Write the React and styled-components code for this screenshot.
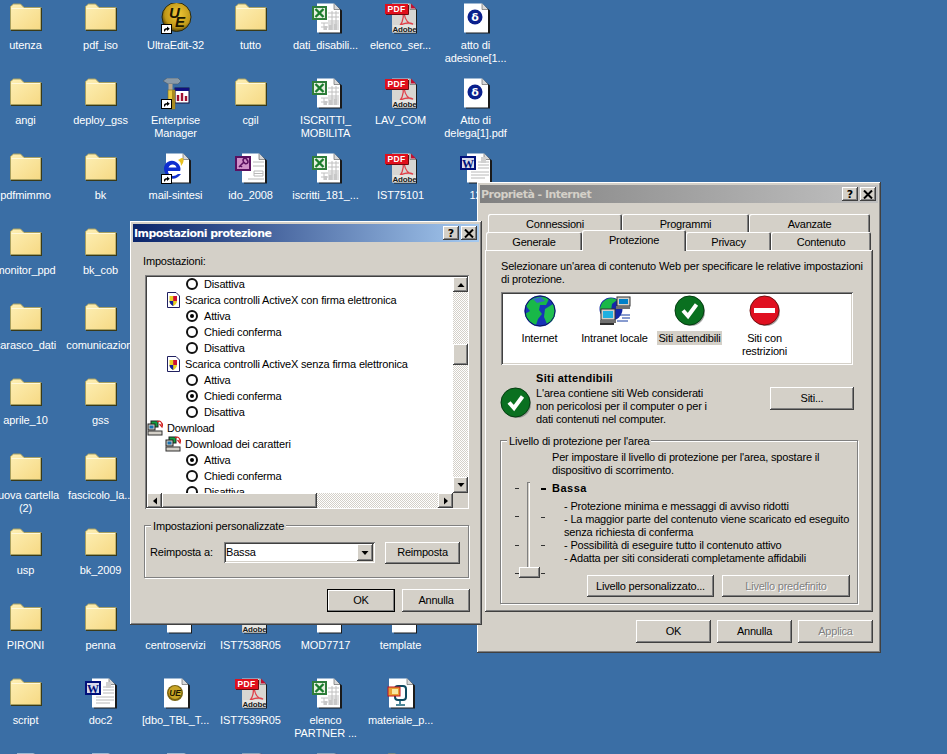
import React, { useId } from "react";
import styled, { createGlobalStyle, css } from "styled-components";

const UI_FONT = `"Liberation Sans", Arial, sans-serif`;

const Global = createGlobalStyle`
  html, body { margin: 0; padding: 0; overflow: hidden; background: #3a6ea5; }
  * { box-sizing: border-box; }
`;

const raised = css`
  background: #d4d0c8;
  box-shadow: inset -1px -1px #404040, inset 1px 1px #fff, inset -2px -2px #808080, inset 2px 2px #d4d0c8;
`;
const sunken = css`
  box-shadow: inset 1px 1px #808080, inset -1px -1px #fff, inset 2px 2px #404040, inset -2px -2px #d4d0c8;
`;

const Desktop = styled.main`
  position: relative;
  width: 947px;
  height: 754px;
  overflow: hidden;
  background: #3a6ea5;
  font: 11px/13px ${UI_FONT};
  letter-spacing: -0.17px;
  color: #000;
`;
const IconGrid = styled.div`
  display: grid;
  grid-template-columns: repeat(7, 75px);
  grid-auto-rows: 75px;
  margin-left: -12px;
`;
const Cell = styled.div`
  padding-top: 3px;
`;
const CellIcon = styled.div`
  width: 32px;
  height: 32px;
  margin-left: 22px;
  svg { display: block; }
`;
const CellLabel = styled.div`
  margin-top: 4px;
  text-align: center;
  color: #fff;
  white-space: pre;
  letter-spacing: -0.1px;
`;

const Win = styled.section`
  position: absolute;
  left: ${(p) => p.$x}px;
  top: ${(p) => p.$y}px;
  width: ${(p) => p.$w}px;
  height: ${(p) => p.$h}px;
  padding: 3px;
  ${raised}
`;
const TitleBar = styled.header`
  display: flex;
  align-items: center;
  height: 18px;
  padding: 0 2px 0 1px;
  background: ${(p) =>
    p.$active ? "linear-gradient(90deg, #0a246a, #a6caf0)" : "linear-gradient(90deg, #808080, #c0c0c0)"};
`;
const TitleText = styled.h1`
  flex: 1;
  margin: 0;
  font: bold 11px/13px "DejaVu Sans", Verdana, sans-serif;
  letter-spacing: -0.55px;
  color: ${(p) => (p.$active ? "#fff" : "#d4d0c8")};
`;
const CaptionButton = styled.button`
  display: flex;
  align-items: center;
  justify-content: center;
  width: 16px;
  height: 14px;
  margin-left: ${(p) => (p.$gap ? "2px" : "0")};
  padding: 0;
  border: 0;
  font: bold 11px/11px "DejaVu Sans", sans-serif;
  color: #000;
  ${raised}
`;

const Button = styled.button`
  width: ${(p) => p.$w}px;
  height: ${(p) => p.$h || 23}px;
  padding: 0;
  border: 0;
  font: 11px/13px ${UI_FONT};
  letter-spacing: -0.22px;
  color: ${(p) => (p.disabled ? "#808080" : "#000")};
  text-shadow: ${(p) => (p.disabled ? "1px 1px #fff" : "none")};
  ${raised}
  ${(p) =>
    p.$default &&
    css`
      box-shadow: inset 0 0 0 1px #000, inset -2px -2px #808080, inset 2px 2px #fff;
    `}
`;

/* security settings dialog */
const DialogBody = styled.div`
  display: flex;
  flex-direction: column;
  padding: 13px 0 0 0;
`;
const FieldLabel = styled.div`
  margin-left: 10px;
`;
const ListBox = styled.div`
  display: grid;
  grid-template-columns: 306px 15px;
  grid-template-rows: 216px 15px;
  width: 324px;
  height: 234px;
  margin: 7px 0 0 12px;
  padding: 2px 1px 1px 2px;
  background: #fff;
  ${sunken}
`;
const TreeView = styled.div`
  overflow: hidden;
  & > div:first-child { margin-top: -1px; }
`;
const TreeRow = styled.div`
  display: flex;
  align-items: center;
  gap: ${(p) => (p.$radio ? 6 : 4)}px;
  height: 16px;
  padding-left: ${(p) => p.$indent}px;
  white-space: nowrap;
  svg { flex: none; }
`;
const Radio = styled.span`
  position: relative;
  flex: none;
  width: 12px;
  height: 12px;
  border: 2px solid #111;
  border-radius: 50%;
  background: #fff;
  ${(p) =>
    p.$on &&
    css`
      &::after {
        content: "";
        position: absolute;
        left: 2px;
        top: 2px;
        width: 4px;
        height: 4px;
        border-radius: 50%;
        background: #000;
      }
    `}
`;
const Dither = css`
  background: repeating-conic-gradient(#fff 0 25%, #d4d0c8 0 50%) 0 0 / 2px 2px;
`;
const VBar = styled.div`
  display: flex;
  flex-direction: column;
  ${Dither}
`;
const HBar = styled.div`
  display: flex;
  ${Dither}
`;
const BarButton = styled.div`
  flex: none;
  display: flex;
  align-items: center;
  justify-content: center;
  width: 15px;
  height: ${(p) => p.$h || 15}px;
  ${raised}
`;
const BarThumb = styled.div`
  flex: none;
  width: ${(p) => p.$w}px;
  height: ${(p) => p.$h}px;
  margin: ${(p) => p.$m || 0};
  ${raised}
`;
const BarCorner = styled.div`
  background: #d4d0c8;
`;

const Group = styled.div`
  position: relative;
  border: 1px solid #808080;
  box-shadow: 1px 1px #fff, inset 1px 1px #fff;
`;
const Legend = styled.span`
  position: absolute;
  left: ${(p) => p.$x}px;
  top: -6px;
  padding: 0 2px;
  background: #d4d0c8;
`;
const ResetGroup = styled(Group)`
  display: flex;
  align-items: center;
  width: 325px;
  height: 53px;
  margin: 16px 0 0 11px;
  padding: 2px 0 0 5px;
`;
const ResetLabel = styled.span`
  width: 74px;
`;
const Combo = styled.div`
  display: flex;
  align-items: center;
  justify-content: space-between;
  width: 151px;
  height: 21px;
  padding: 2px;
  background: #fff;
  ${sunken}
`;
const ComboValue = styled.span`
  padding-left: 0;
`;
const ComboArrow = styled(BarButton)`
  width: 16px;
  height: 17px;
`;
const ResetButton = styled(Button)`
  margin-left: 10px;
`;
const Footer = styled.div`
  display: flex;
  justify-content: flex-end;
  gap: ${(p) => p.$gap}px;
  margin: ${(p) => p.$m};
`;

/* internet properties */
const TabArea = styled.div`
  display: flex;
  flex-direction: column;
  margin: 11px 5px 0 5px;
`;
const TabRow = styled.div`
  display: flex;
  height: 18px;
  margin-left: ${(p) => p.$off}px;
`;
const Tab = styled.div`
  position: relative;
  display: flex;
  align-items: center;
  justify-content: center;
  width: ${(p) => p.$w}px;
  height: ${(p) => (p.$on ? 21 : 18)}px;
  margin-top: ${(p) => (p.$on ? -2 : 0)}px;
  padding: ${(p) => (p.$on ? "0 0 1px" : "2px 0 0")};
  letter-spacing: -0.25px;
  background: #d4d0c8;
  border-radius: 2px 2px 0 0;
  box-shadow: inset 1px 1px #fff, inset -1px 0 #404040, inset -2px 0 #808080;
  z-index: ${(p) => (p.$on ? 2 : 1)};
`;
const TabPanel = styled.div`
  display: flex;
  flex-direction: column;
  height: 362px;
  padding: 10px 15px 0 16px;
  ${raised}
`;
const Intro = styled.p`
  margin: 0;
  white-space: pre;
`;
const ZoneBox = styled.div`
  display: flex;
  width: 352px;
  height: 73px;
  margin-top: 6px;
  padding: 3px 0 0 1px;
  background: #fff;
  ${sunken}
`;
const Zone = styled.div`
  display: flex;
  flex-direction: column;
  align-items: center;
  width: 75px;
  flex: none;
`;
const ZoneName = styled.div`
  margin-top: 5px;
  text-align: center;
  white-space: pre;
  span { background: ${(p) => (p.$on ? "#d4d0c8" : "transparent")}; padding: 1px; }
`;
const InfoRow = styled.div`
  display: flex;
  margin-top: 7px;
  height: 52px;
`;
const InfoIcon = styled.div`
  width: 35px;
  padding-top: 15px;
  svg { display: block; margin-left: -1px; }
`;
const InfoText = styled.div`
  width: 234px;
  white-space: pre;
`;
const InfoTitle = styled.div`
  font-weight: bold;
  letter-spacing: 0.3px;
  margin-bottom: 1.5px;
`;
const SitesButton = styled(Button)`
  margin-top: 15px;
`;
const LevelGroup = styled(Group)`
  display: grid;
  grid-template-columns: 51px 1fr;
  width: 358px;
  height: 164px;
  margin: 16px 0 0 -1px;
  padding-top: 10px;
`;
const Slider = styled.div`
  position: relative;
  display: flex;
  width: 31px;
  height: 96px;
  margin: 31px 0 0 14px;
`;
const TickColumn = styled.div`
  display: flex;
  flex-direction: column;
  justify-content: space-between;
  width: 4px;
  padding: 6px 0 4px;
`;
const Tick = styled.i`
  display: block;
  width: ${(p) => (p.$bold ? 5 : 4)}px;
  height: ${(p) => (p.$bold ? 2 : 1)}px;
  background: ${(p) => (p.$bold ? "#000" : "#333")};
`;
const Track = styled.div`
  width: 3px;
  height: 96px;
  margin: 0 11px 0 8px;
  background: #d4d0c8;
  box-shadow: inset 1px 1px #808080, inset -1px -1px #fff;
`;
const Thumb = styled.div`
  position: absolute;
  left: 4px;
  top: 85px;
  width: 21px;
  height: 11px;
  ${raised}
`;
const LevelBody = styled.div`
  display: flex;
  flex-direction: column;
  white-space: pre;
`;
const LevelName = styled.div`
  margin-top: 5px;
  font-weight: bold;
  letter-spacing: 0.5px;
`;
const Bullets = styled.div`
  margin: 5px 0 0 12px;
`;
const LevelButtons = styled.div`
  display: flex;
  gap: 8px;
  margin: 10px 0 0 35px;
`;

/* ---------- drawings ---------- */
const Svg = ({ size = 32, children }) => (
  <svg width={size} height={size} viewBox={`0 0 ${size} ${size}`} xmlns="http://www.w3.org/2000/svg">
    {children}
  </svg>
);
const Shortcut = () => (
  <g>
    <rect x="1.5" y="21.5" width="10" height="9" fill="#fff" stroke="#000" strokeWidth="1" />
    <path d="M4 28.5 V26.5 Q4.5 25 7 25 V23.5 L9.8 25.8 L7 28 V26.6 Q5.3 26.6 5 28.5 Z" fill="#000" />
  </g>
);
const Folder = () => {
  const id = useId();
  return (
    <Svg>
      <defs>
        <linearGradient id={id} x1="0" y1="0" x2="1" y2="1">
          <stop offset="0" stopColor="#fdefb4" />
          <stop offset="1" stopColor="#f6d984" />
        </linearGradient>
      </defs>
      <path d="M0.5 3.5 L3.5 1 H10.5 L14 4.5 H31 V26.5 H0.5 Z" fill={`url(#${id})`} stroke="#a8a060" />
      <path d="M31.5 5 V27.5 H1" fill="none" stroke="#3a3a18" strokeWidth="1.2" />
      <path d="M1.5 5.5 H30" stroke="#fff8d8" />
    </Svg>
  );
};
const Page = ({ x = 7, fill = "#fff", w = 24 }) => (
  <g>
    <path
      d={`M${x + 1} 1 H${x + w - 7} L${x + w} 7 V30 H${x + 1} Z`}
      fill="#1a1a1a"
      transform="translate(1 0.5)"
    />
    <path d={`M${x} 0.5 H${x + w - 7} L${x + w - 1} 6.5 V29.5 H${x} Z`} fill={fill} />
    <path d={`M${x + w - 7} 0.5 V6.5 H${x + w - 1}`} fill="#d8d8d8" stroke="#555" strokeWidth="0.6" />
  </g>
);
const ExcelDoc = () => (
  <Svg>
    <Page />
    <path
      d="M18 10 H29 M18 14 H29 M18 18 H29 M18 22 H29 M18 26 H29 M22 8 V27 M26 8 V27 M11 20 H29 M11 24 H29 M14 20 V27"
      stroke="#c0c0c0"
      fill="none"
    />
    <path d="M14 23 H17 V27 H14Z M19 22 H22 V27 H19Z M24 21 H27 V27 H24Z" fill="#c8c8c8" />
    <rect x="2" y="3" width="15" height="14" fill="#2e7d3a" />
    <rect x="4" y="5" width="11" height="10" fill="#e6efe0" />
    <path d="M5.5 6 L13.5 14 M13.5 6 L5.5 14" stroke="#1a7d2c" strokeWidth="2.4" />
  </Svg>
);
const PdfDoc = () => (
  <Svg>
    <Page x={7} w={25} fill="#d8d6d2" />
    <path d="M26 0.5 L31 5.5 H26 Z" fill="#c01030" />
    <path
      d="M18 10 C19.5 16 16 23 12 25 C16 20 24 19 28 21 C23 21 20 16 19 10"
      fill="none"
      stroke="#e0404a"
      strokeWidth="1.3"
    />
    <rect x="0" y="1" width="23" height="10" fill="#e0101c" />
    <path d="M1 11.5 H23.5 V2" fill="none" stroke="#6a0a10" />
    <text x="11.5" y="9" textAnchor="middle" fill="#fff" fontFamily="'Liberation Sans', sans-serif" fontWeight="bold" fontSize="8.5" letterSpacing="0.4">
      PDF
    </text>
    <rect x="8" y="22" width="23" height="7.5" fill="#e4e4e0" />
    <text x="19.5" y="29" textAnchor="middle" fill="#1a1a1a" fontFamily="'Liberation Sans', sans-serif" fontWeight="bold" fontSize="8">
      Adobe
    </text>
  </Svg>
);
const DeltaDoc = () => (
  <Svg>
    <Page x={4} w={25} />
    <circle cx="15" cy="14" r="7.5" fill="#0a1f8c" />
    <text x="15" y="18" textAnchor="middle" fill="#fff" fontFamily="'DejaVu Sans', sans-serif" fontWeight="bold" fontSize="11">
      δ
    </text>
  </Svg>
);
const WordDoc = () => (
  <Svg>
    <Page />
    <path d="M18 9 H29 M18 12 H29 M18 15 H29 M11 19 H29 M11 22 H29 M11 25 H25" stroke="#b8b8b8" />
    <rect x="21" y="4" width="5" height="6" fill="#d0d0d0" />
    <rect x="0" y="3" width="16" height="14" fill="#00107a" />
    <rect x="2" y="5" width="12" height="10" fill="#fff" />
    <rect x="2" y="5" width="12" height="10" fill="#00107a" opacity="0.15" />
    <text x="8" y="14.5" textAnchor="middle" fill="#00107a" fontFamily="'Liberation Serif', serif" fontWeight="bold" fontSize="12">
      W
    </text>
  </Svg>
);
const AccessDoc = () => (
  <Svg>
    <Page />
    <path d="M18 9 H29 M18 13 H29 M19 18 H28 V23 H19 Z M19 20.5 H28 M13 26 H29" stroke="#b8b8b8" fill="none" />
    <rect x="0" y="3" width="16" height="15" fill="#5a1060" />
    <rect x="2" y="5" width="12" height="11" fill="#d090c8" />
    <path d="M4 14 L9 9 M9 9 a2 2 0 1 0 3 -2 a2 2 0 1 0 -3 2 M5.5 12.5 L7 14" stroke="#5a1060" strokeWidth="1.6" fill="none" />
  </Svg>
);
const UEDoc = () => (
  <Svg>
    <Page x={4} w={25} />
    <circle cx="15" cy="15" r="8" fill="#7a6410" />
    <circle cx="15" cy="14.5" r="6.5" fill="#c9a526" />
    <text x="15" y="18" textAnchor="middle" fill="#201800" fontFamily="'Liberation Sans', sans-serif" fontWeight="bold" fontStyle="italic" fontSize="8.5">
      UE
    </text>
  </Svg>
);
const MediaDoc = () => (
  <Svg>
    <Page x={4} w={25} />
    <path d="M15 22 V26 M11 27 H20" stroke="#14607a" strokeWidth="1.5" />
    <rect x="10" y="8" width="11" height="14" rx="3" fill="none" stroke="#0e4a60" strokeWidth="2" />
    <rect x="3" y="9" width="12" height="9" fill="#e8a030" stroke="#c01020" />
    <rect x="7" y="11" width="6" height="5" fill="#f8e8a0" />
  </Svg>
);
const UltraEdit = () => {
  const id = useId();
  return (
    <Svg>
      <defs>
        <radialGradient id={id} cx="0.55" cy="0.4" r="0.6">
          <stop offset="0" stopColor="#f0c838" />
          <stop offset="0.75" stopColor="#c09818" />
          <stop offset="1" stopColor="#584404" />
        </radialGradient>
      </defs>
      <circle cx="16.5" cy="14" r="14.5" fill={`url(#${id})`} stroke="#2a2a10" />
      <text x="9" y="15" fill="#1a1600" fontFamily="'Liberation Sans', sans-serif" fontWeight="bold" fontStyle="italic" fontSize="15">
        U
      </text>
      <text x="15" y="24" fill="#1a1600" fontFamily="'Liberation Sans', sans-serif" fontWeight="bold" fontStyle="italic" fontSize="15">
        E
      </text>
      <Shortcut />
    </Svg>
  );
};
const EntManager = () => (
  <Svg>
    <path d="M3 3 L7 0 H18 L21 3 L18 6 H8 Z" fill="#8a9aa8" stroke="#4a5a6a" strokeWidth="0.6" />
    <rect x="8.5" y="6" width="4" height="7" fill="#b8a890" />
    <rect x="15" y="10" width="14" height="15" fill="#fff" stroke="#101040" />
    <rect x="15" y="10" width="14" height="3" fill="#101080" />
    <path d="M18 23 V17 M22 23 V15 M26 23 V18" stroke="#a01030" strokeWidth="2.4" />
    <rect x="8" y="12" width="7" height="19" fill="#e8c840" stroke="#7a6a20" strokeWidth="0.6" />
    <rect x="12" y="12" width="3" height="19" fill="#a88a20" />
    <Shortcut />
  </Svg>
);
const IEDoc = () => (
  <Svg>
    <Page x={6} w={24} />
    <path d="M5 20 C1 11 10 5 16 9 C21 12 21 17 20 18 H8 C8 22 13 25 18 21 L21 21 C16 28 8 27 5 20 Z M8.5 14.5 H16.5 C15.5 10.5 10 10.5 8.5 14.5 Z" fill="#0f2fd0" />
    <path d="M20 6 C22 4 25 5 23 10 L21 13 C21 10 20 8 18 7 Z" fill="#e8c020" />
    <Shortcut />
  </Svg>
);
const BlankDoc = () => (
  <Svg>
    <Page x={7} w={25} />
  </Svg>
);

const Globe = () => (
  <Svg>
    <circle cx="16" cy="16" r="15.5" fill="#1834b8" />
    <path d="M5 6 C11 1 20 0 25 4 L22 10 L16 10 L15 15 L18 19 L14 24 L12 30 C7 28 3 25 1 19 L6 16 L2 11 Z" fill="#18b848" />
    <path d="M21 14 L29 9 C32 15 32 21 28 26 L23 29 L20 22 Z" fill="#20c050" />
    <path d="M9 4 L17 2 L21 6 L13 8 Z" fill="#3858e0" opacity="0.85" />
    <circle cx="16" cy="16" r="15" fill="none" stroke="#0a1460" />
  </Svg>
);
const Intranet = () => (
  <Svg>
    <circle cx="12" cy="14" r="11.5" fill="#1428a8" />
    <path d="M3 8 C7 3 13 2 18 5 L13 9 L12 16 L7 23 C4 21 1 17 1 13 Z" fill="#18b848" />
    <rect x="18" y="2" width="13" height="9" fill="#d4d0c8" stroke="#303030" />
    <rect x="20" y="4" width="9" height="5" fill="#0080c8" />
    <rect x="17" y="11" width="14" height="3" fill="#707070" />
    <rect x="2" y="14" width="14" height="11" fill="#d4d0c8" stroke="#303030" />
    <rect x="4" y="16" width="10" height="7" fill="#20b0e0" />
    <rect x="1" y="25" width="16" height="3" fill="#707070" />
    <rect x="1" y="28" width="14" height="2" fill="#303030" />
    <path d="M20 20 H31 M23 23 H31 M18 26 H29" stroke="#1038a0" />
  </Svg>
);
const CheckBadge = () => (
  <Svg>
    <circle cx="17" cy="17" r="14" fill="#808080" opacity="0.7" />
    <circle cx="15.5" cy="15.5" r="14.5" fill="#0a7020" stroke="#043c10" />
    <path d="M9 15.5 L14 21 L22.5 9.5" fill="none" stroke="#fff" strokeWidth="4" />
  </Svg>
);
const StopBadge = () => (
  <Svg>
    <circle cx="17" cy="17" r="14" fill="#808080" opacity="0.7" />
    <circle cx="15.5" cy="15.5" r="14.5" fill="#e01020" stroke="#701010" />
    <rect x="5" y="13" width="21" height="5" fill="#fff" />
  </Svg>
);
const ActiveXIcon = () => (
  <Svg size={16}>
    <path d="M2.5 0.5 H11 L14.5 4 V15.5 H2.5 Z" fill="#fff" stroke="#202060" />
    <path d="M4.5 4 H12 V9 C12 12 9 13.5 8.2 14 C7.5 13.5 4.5 12 4.5 9 Z" fill="#e8d020" />
    <path d="M8.2 4 H12 V9 H8.2 Z" fill="#d01030" />
    <path d="M4.5 9 H8.2 V14 C7.5 13.5 4.5 12 4.5 9 Z" fill="#1020a0" />
  </Svg>
);
const DownloadIcon = () => (
  <Svg size={16}>
    <rect x="4" y="1" width="7" height="6" fill="#10a040" stroke="#202020" />
    <rect x="1" y="4" width="7" height="6" fill="#d4d0c8" stroke="#202020" />
    <rect x="2.5" y="5.5" width="4" height="3" fill="#1870b0" />
    <rect x="1" y="11" width="14" height="4" fill="#d4d0c8" stroke="#303030" />
    <path d="M10 2 C13 0 15 2 15 5 M12.5 4 L15 7 L16 3.5" fill="none" stroke="#d02020" strokeWidth="1.2" />
  </Svg>
);
const arrowPaths = {
  up: "M4 2 L0.5 6 H7.5 Z",
  down: "M0.5 2 H7.5 L4 6 Z",
  left: "M2 4 L6 0.5 V7.5 Z",
  right: "M6 4 L2 0.5 V7.5 Z",
};
const Arrow = ({ dir }) => (
  <svg width="8" height="8" viewBox="0 0 8 8">
    <path d={arrowPaths[dir]} fill="#000" />
  </svg>
);
const CloseGlyph = () => (
  <svg width="10" height="9" viewBox="0 0 10 9">
    <path d="M1 0.5 L9 8.5 M9 0.5 L1 8.5" stroke="#000" strokeWidth="2" />
  </svg>
);

const icons = {
  folder: Folder, excel: ExcelDoc, pdf: PdfDoc, delta: DeltaDoc, word: WordDoc, access: AccessDoc,
  ue: UltraEdit, em: EntManager, ie: IEDoc, uedoc: UEDoc, media: MediaDoc, blank: BlankDoc,
};

const desktop = [
  ["folder", "utenza"], ["folder", "pdf_iso"], ["ue", "UltraEdit-32"], ["folder", "tutto"], ["excel", "dati_disabili..."], ["pdf", "elenco_ser..."], ["delta", "atto di\nadesione[1..."],
  ["folder", "angi"], ["folder", "deploy_gss"], ["em", "Enterprise\nManager"], ["folder", "cgil"], ["excel", "ISCRITTI_\nMOBILITA"], ["pdf", "LAV_COM"], ["delta", "Atto di\ndelega[1].pdf"],
  ["folder", "pdfmimmo"], ["folder", "bk"], ["ie", "mail-sintesi"], ["access", "ido_2008"], ["excel", "iscritti_181_..."], ["pdf", "IST75101"], ["word", "12"],
  ["folder", "monitor_ppd"], ["folder", "bk_cob"], null, null, null, null, null,
  ["folder", "carasco_dati"], ["folder", "comunicazioni"], null, null, null, null, null,
  ["folder", "aprile_10"], ["folder", "gss"], null, null, null, null, null,
  ["folder", "nuova cartella\n(2)"], ["folder", "fascicolo_la..."], null, null, null, null, null,
  ["folder", "usp"], ["folder", "bk_2009"], null, null, null, null, null,
  ["folder", "PIRONI"], ["folder", "penna"], ["blank", "centroservizi"], ["pdf", "IST7538R05"], ["blank", "MOD7717"], ["blank", "template"], null,
  ["folder", "script"], ["word", "doc2"], ["uedoc", "[dbo_TBL_T..."], ["pdf", "IST7539R05"], ["excel", "elenco\nPARTNER ..."], ["media", "materiale_p..."], null,
  ["excel", ""], ["excel", ""], ["blank", ""], ["pdf", ""], ["pdf", ""], ["folder", ""], null,
];

const tree = [
  { kind: "radio", text: "Disattiva" },
  { kind: "x", text: "Scarica controlli ActiveX con firma elettronica" },
  { kind: "radio", text: "Attiva", on: true },
  { kind: "radio", text: "Chiedi conferma" },
  { kind: "radio", text: "Disattiva" },
  { kind: "x", text: "Scarica controlli ActiveX senza firma elettronica" },
  { kind: "radio", text: "Attiva" },
  { kind: "radio", text: "Chiedi conferma", on: true },
  { kind: "radio", text: "Disattiva" },
  { kind: "root", text: "Download" },
  { kind: "dl", text: "Download dei caratteri" },
  { kind: "radio", text: "Attiva", on: true },
  { kind: "radio", text: "Chiedi conferma" },
  { kind: "radio", text: "Disattiva" },
];

const Row = ({ kind, text, on }) => {
  if (kind === "radio")
    return (
      <TreeRow $radio $indent={39}>
        <Radio $on={on} />
        {text}
      </TreeRow>
    );
  return (
    <TreeRow $indent={kind === "root" ? 0 : 18}>
      {kind === "x" ? <ActiveXIcon /> : <DownloadIcon />}
      {text}
    </TreeRow>
  );
};

const SecurityDialog = () => (
  <Win $x={130} $y={221} $w={352} $h={404}>
    <TitleBar $active>
      <TitleText $active>Impostazioni protezione</TitleText>
      <CaptionButton>?</CaptionButton>
      <CaptionButton $gap>
        <CloseGlyph />
      </CaptionButton>
    </TitleBar>
    <DialogBody>
      <FieldLabel>Impostazioni:</FieldLabel>
      <ListBox>
        <TreeView>
          {tree.map((r, i) => (
            <Row key={i} {...r} />
          ))}
        </TreeView>
        <VBar>
          <BarButton $h={15}>
            <Arrow dir="up" />
          </BarButton>
          <BarThumb $w={15} $h={21} $m="52px 0 auto" />
          <BarButton $h={16}>
            <Arrow dir="down" />
          </BarButton>
        </VBar>
        <HBar>
          <BarButton>
            <Arrow dir="left" />
          </BarButton>
          <BarThumb $w={155} $h={15} $m="0 auto 0 0" />
          <BarButton>
            <Arrow dir="right" />
          </BarButton>
        </HBar>
        <BarCorner />
      </ListBox>
      <ResetGroup>
        <Legend $x={6}>Impostazioni personalizzate</Legend>
        <ResetLabel>Reimposta a:</ResetLabel>
        <Combo>
          <ComboValue>Bassa</ComboValue>
          <ComboArrow>
            <Arrow dir="down" />
          </ComboArrow>
        </Combo>
        <ResetButton $w={75} $h={22}>
          Reimposta
        </ResetButton>
      </ResetGroup>
      <Footer $gap={7} $m="11px 9px 0 0">
        <Button $w={68} $default>
          OK
        </Button>
        <Button $w={68}>Annulla</Button>
      </Footer>
    </DialogBody>
  </Win>
);

const PropertiesDialog = () => (
  <Win $x={477} $y={182} $w={404} $h={471}>
    <TitleBar>
      <TitleText>Proprietà - Internet</TitleText>
      <CaptionButton>?</CaptionButton>
      <CaptionButton $gap>
        <CloseGlyph />
      </CaptionButton>
    </TitleBar>
    <TabArea>
      <TabRow $off={3}>
        <Tab $w={134}>Connessioni</Tab>
        <Tab $w={127}>Programmi</Tab>
        <Tab $w={121}>Avanzate</Tab>
      </TabRow>
      <TabRow $off={1}>
        <Tab $w={96}>Generale</Tab>
        <Tab $w={104} $on>
          Protezione
        </Tab>
        <Tab $w={85}>Privacy</Tab>
        <Tab $w={100}>Contenuto</Tab>
      </TabRow>
      <TabPanel>
        <Intro>{"Selezionare un'area di contenuto Web per specificare le relative impostazioni\ndi protezione."}</Intro>
        <ZoneBox>
          <Zone>
            <Globe />
            <ZoneName>
              <span>Internet</span>
            </ZoneName>
          </Zone>
          <Zone>
            <Intranet />
            <ZoneName>
              <span>Intranet locale</span>
            </ZoneName>
          </Zone>
          <Zone>
            <CheckBadge />
            <ZoneName $on>
              <span>Siti attendibili</span>
            </ZoneName>
          </Zone>
          <Zone>
            <StopBadge />
            <ZoneName>{"Siti con\nrestrizioni"}</ZoneName>
          </Zone>
        </ZoneBox>
        <InfoRow>
          <InfoIcon>
            <CheckBadge />
          </InfoIcon>
          <InfoText>
            <InfoTitle>Siti attendibili</InfoTitle>
            {"L'area contiene siti Web considerati\nnon pericolosi per il computer o per i\ndati contenuti nel computer."}
          </InfoText>
          <SitesButton $w={84} $h={23}>
            Siti...
          </SitesButton>
        </InfoRow>
        <LevelGroup>
          <Legend $x={6}>Livello di protezione per l'area</Legend>
          <Slider>
            <TickColumn>
              <Tick />
              <Tick />
              <Tick />
              <Tick />
            </TickColumn>
            <Track />
            <TickColumn>
              <Tick $bold />
              <Tick />
              <Tick />
              <Tick />
            </TickColumn>
            <Thumb />
          </Slider>
          <LevelBody>
            {"Per impostare il livello di protezione per l'area, spostare il\ndispositivo di scorrimento."}
            <LevelName>Bassa</LevelName>
            <Bullets>
              {"- Protezione minima e messaggi di avviso ridotti\n- La maggior parte del contenuto viene scaricato ed eseguito\nsenza richiesta di conferma\n- Possibilità di eseguire tutto il contenuto attivo\n- Adatta per siti considerati completamente affidabili"}
            </Bullets>
            <LevelButtons>
              <Button $w={127} $h={22}>
                Livello personalizzato...
              </Button>
              <Button $w={128} $h={22} disabled>
                Livello predefinito
              </Button>
            </LevelButtons>
          </LevelBody>
        </LevelGroup>
      </TabPanel>
      <Footer $gap={6} $m="8px 0 0 0">
        <Button $w={75}>OK</Button>
        <Button $w={75}>Annulla</Button>
        <Button $w={75} disabled>
          Applica
        </Button>
      </Footer>
    </TabArea>
  </Win>
);

export default function App() {
  return (
    <Desktop>
      <Global />
      <IconGrid>
        {desktop.map((item, i) => {
          if (!item) return <Cell key={i} />;
          const Icon = icons[item[0]];
          return (
            <Cell key={i}>
              <CellIcon>
                <Icon />
              </CellIcon>
              <CellLabel>{item[1]}</CellLabel>
            </Cell>
          );
        })}
      </IconGrid>
      <PropertiesDialog />
      <SecurityDialog />
    </Desktop>
  );
}
